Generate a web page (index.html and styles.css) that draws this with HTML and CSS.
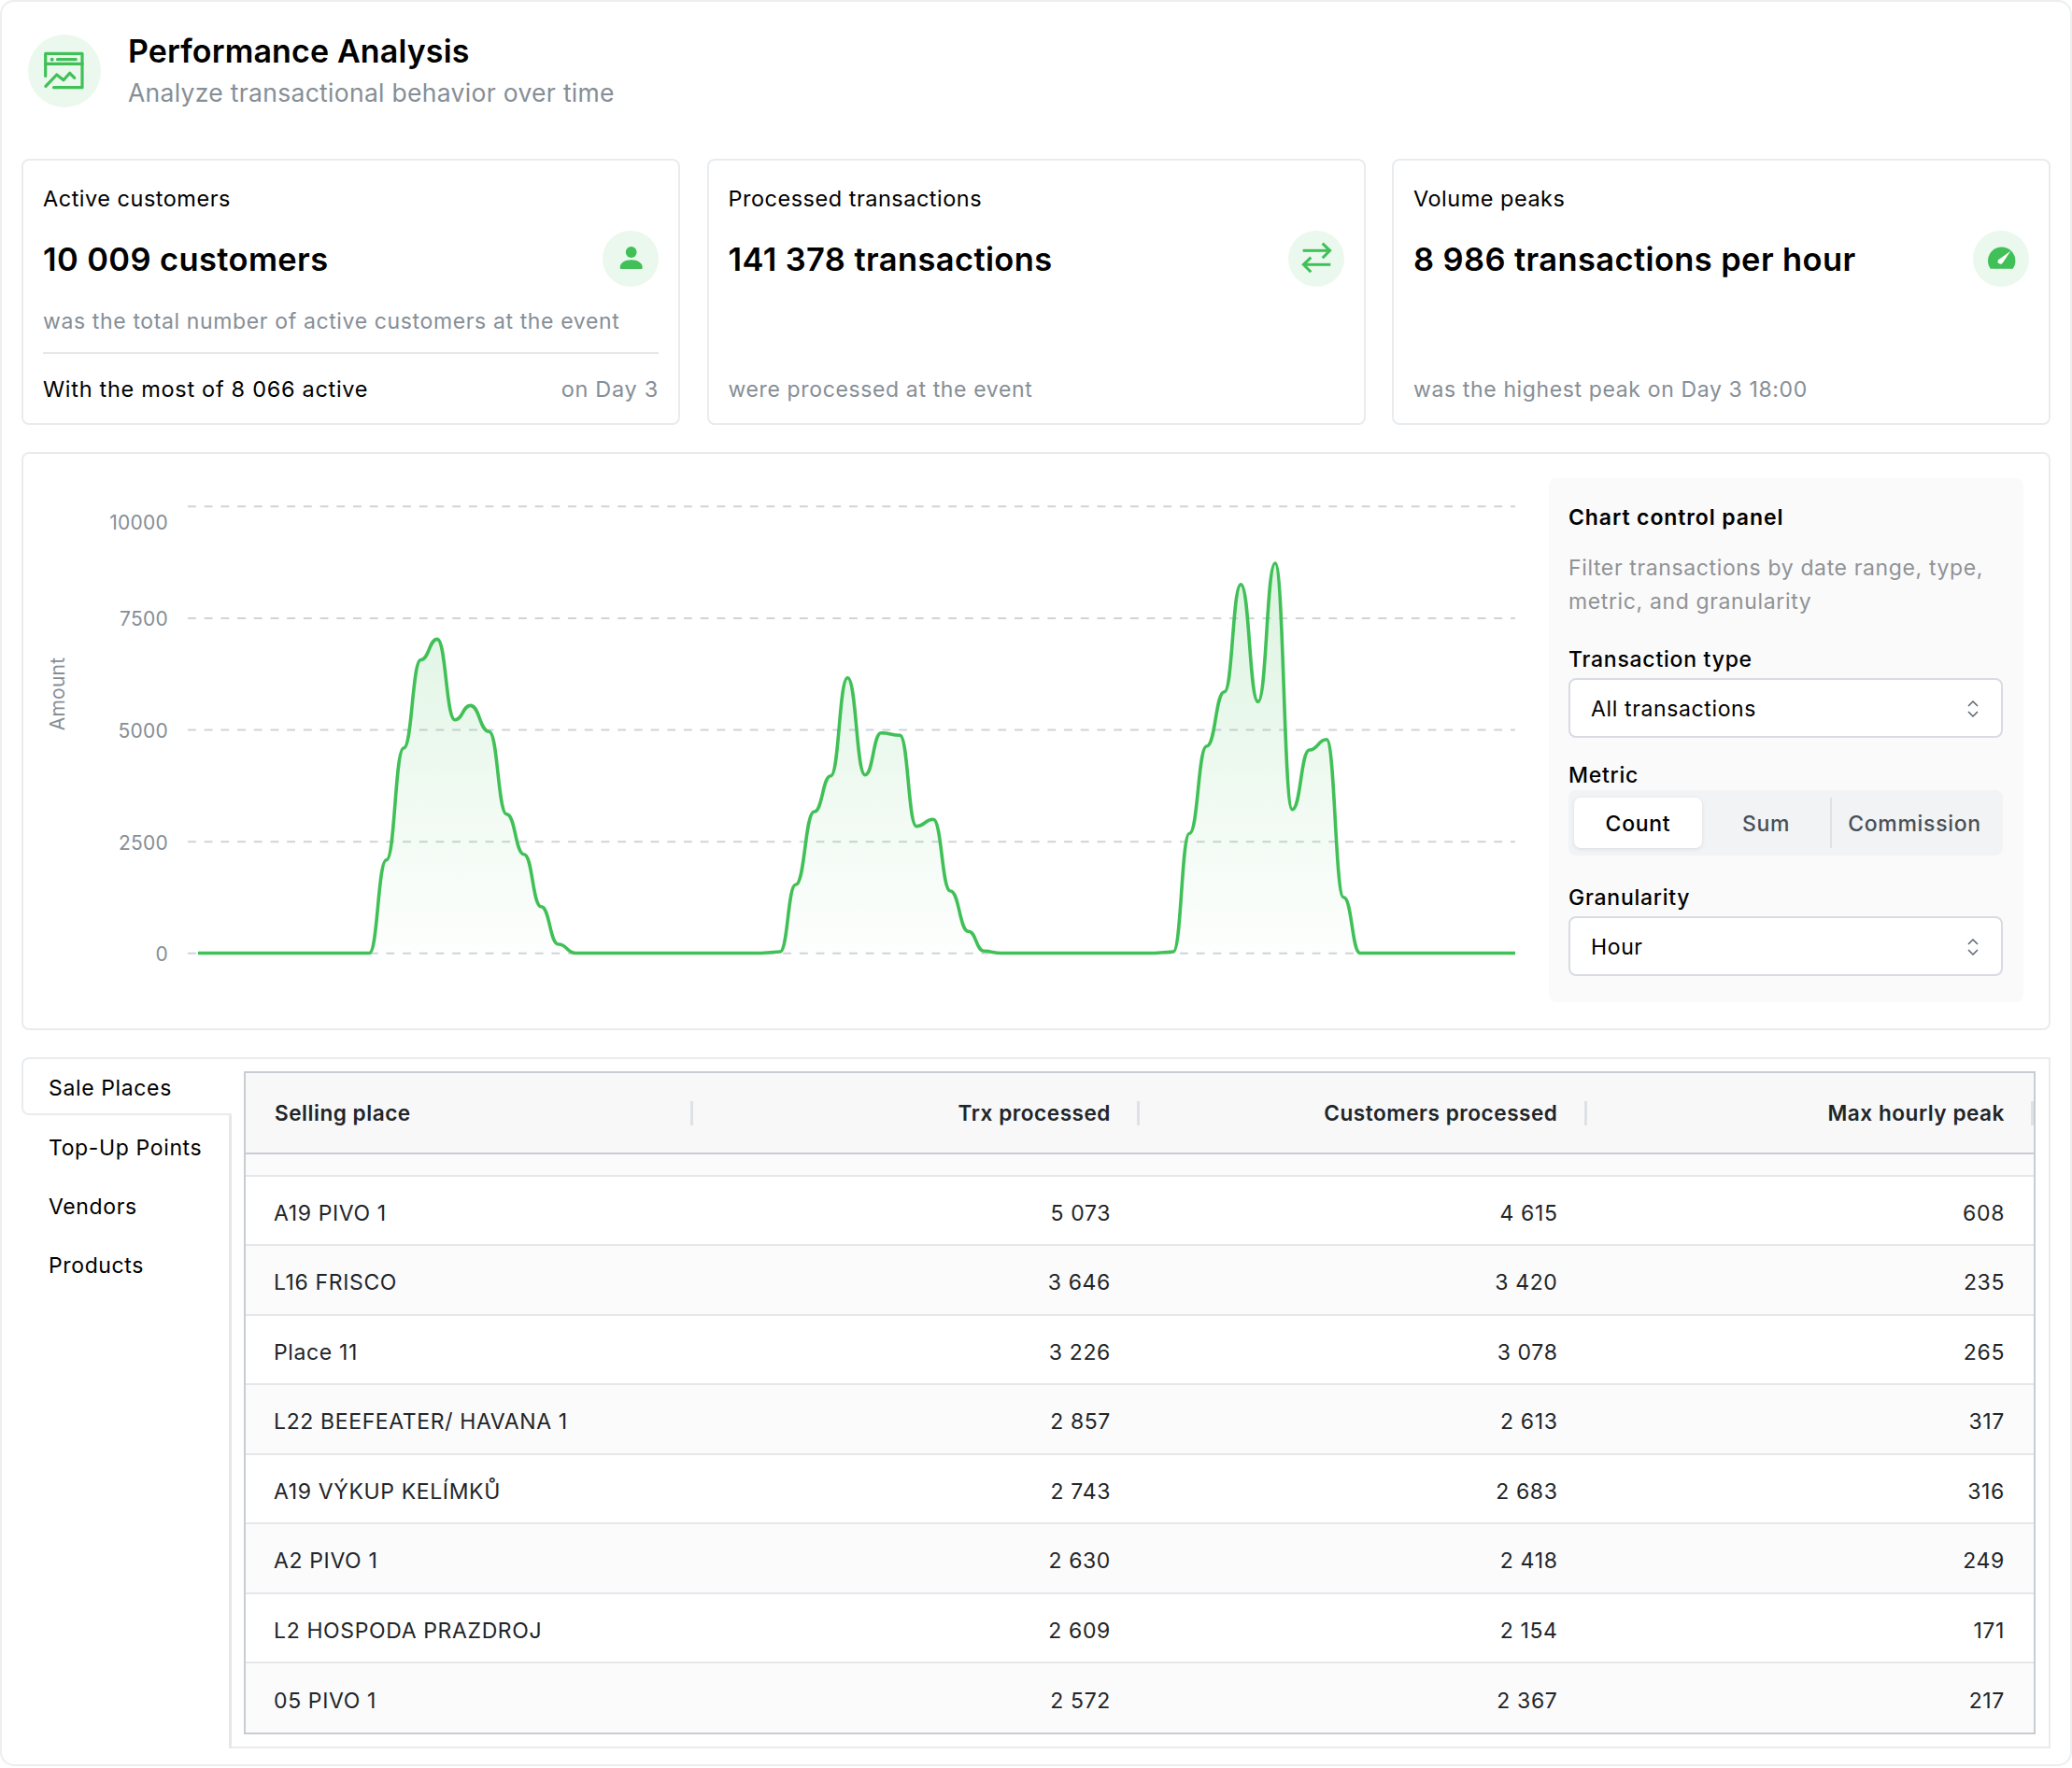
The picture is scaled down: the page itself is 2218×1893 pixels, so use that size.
FILE: index.html
```html
<!DOCTYPE html>
<html lang="en">
<head>
<meta charset="utf-8">
<title>Performance Analysis</title>
<link rel="stylesheet" href="styles.css">
</head>
<body>
<div class="page">
  <header class="header">
    <svg class="header-icon" viewBox="0 0 78 78" width="78" height="78">
      <circle cx="39" cy="39" r="39" fill="#ebf8ee"/>
      <g fill="none" stroke="#40c057" stroke-width="3.2" stroke-linecap="round" stroke-linejoin="round">
        <path d="M18.7 44.5V20.3H58V56.7H27.5"/>
        <path d="M18.7 31.3H58"/>
        <path d="M31.5 26.7H51.3"/>
        <path d="M18.9 55.3L30.7 43L38 48.7L44.7 41.3L49.7 46.3"/>
      </g>
      <circle cx="25.7" cy="26.7" r="2" fill="#40c057"/>
    </svg>
    <div class="header-text">
      <h1 class="title">Performance Analysis</h1>
      <p class="subtitle">Analyze transactional behavior over time</p>
    </div>
  </header>

  <section class="cards">
    <article class="card">
      <div class="card-label">Active customers</div>
      <div class="card-value-row">
        <div class="card-value">10 009 customers</div>
        <svg class="card-icon" viewBox="0 0 60 60" width="60" height="60">
          <circle cx="30" cy="30" r="30" fill="#ebf8ee"/>
          <circle cx="30.7" cy="23" r="5.9" fill="#40c057"/>
          <path d="M18.7 39.5c0-5 5-8.2 12-8.2s12 3.2 12 8.2c0 1-.6 1.5-1.5 1.5h-21c-.9 0-1.5-.5-1.5-1.5z" fill="#40c057"/>
        </svg>
      </div>
      <p class="card-desc card-desc-top">was the total number of active customers at the event</p>
      <div class="card-divider"></div>
      <div class="card-foot">
        <span>With the most of 8 066 active</span>
        <span class="muted">on Day 3</span>
      </div>
    </article>

    <article class="card">
      <div class="card-label">Processed transactions</div>
      <div class="card-value-row">
        <div class="card-value">141 378 transactions</div>
        <svg class="card-icon" viewBox="0 0 60 60" width="60" height="60">
          <circle cx="30" cy="30" r="30" fill="#ebf8ee"/>
          <g fill="none" stroke="#40c057" stroke-width="3">
            <path d="M15.7 21.3H45"/>
            <path d="M36.7 13.7L44.6 21.3L36.7 29.3"/>
            <path d="M45.3 36.3H16"/>
            <path d="M24.3 28.7L16.4 36.3L24.3 44.3"/>
          </g>
        </svg>
      </div>
      <p class="card-desc card-desc-bottom">were processed at the event</p>
    </article>

    <article class="card">
      <div class="card-label">Volume peaks</div>
      <div class="card-value-row">
        <div class="card-value">8 986 transactions per hour</div>
        <svg class="card-icon" viewBox="0 0 60 60" width="60" height="60">
          <circle cx="30" cy="30" r="30" fill="#ebf8ee"/>
          <path d="M18.7 40.7A14.7 14.7 0 1 1 42.7 40.7Z" fill="#40c057"/>
          <path d="M40.3 21.7L31.6 34.8a3 3 0 0 1-4.8-3.4Z" fill="#fff"/>
        </svg>
      </div>
      <p class="card-desc card-desc-bottom">was the highest peak on Day 3 18:00</p>
    </article>
  </section>

  <section class="chart-card">
    <svg class="chart" viewBox="25 487 1633 614" width="1633" height="614">
      <defs>
        <linearGradient id="areaFill" x1="0" y1="0" x2="0" y2="1">
          <stop offset="0" stop-color="#40c057" stop-opacity="0.18"/>
          <stop offset="1" stop-color="#40c057" stop-opacity="0.01"/>
        </linearGradient>
      </defs>
      <g class="grid">
        <path d="M201 543.2H1622"/>
        <path d="M201 662.9H1622"/>
        <path d="M201 782.6H1622"/>
        <path d="M201 902.3H1622"/>
        <path d="M201 1021.8H1622"/>
      </g>
      <g class="axis">
        <text x="180" y="567.5">10000</text>
        <text x="180" y="670.5">7500</text>
        <text x="180" y="790.5">5000</text>
        <text x="180" y="910.5">2500</text>
        <text x="180" y="1029.5">0</text>
      </g>
      <text class="axis-title" transform="translate(69 744) rotate(-90)">Amount</text>
      <path class="area" fill="url(#areaFill)" d="M212 1021.5H395.3C404.5 1021.5 404.5 921.8 413.7 921.8C422.9 921.8 422.9 802 432.1 802C441.3 802 441.3 707.5 450.5 707.5C459.3 707.5 459.3 685.4 468 685.4C477.5 685.4 477.5 771.8 487 771.8C495.3 771.8 495.3 756.4 503.6 756.4C513.5 756.4 513.5 784.3 523.5 784.3C533 784.3 533 872.9 542.5 872.9C551.7 872.9 551.7 915.7 560.9 915.7C570.1 915.7 570.1 971.8 579.3 971.8C588.5 971.8 588.5 1012 597.7 1012C606.9 1012 606.9 1021.5 616.1 1021.5H815L835 1020C843.4 1020 843.4 948.3 851.7 948.3C861.7 948.3 861.7 870 871.7 870C880.5 870 880.5 831.7 889.3 831.7C898.3 831.7 898.3 726.7 907.3 726.7C916.7 726.7 916.7 830.7 926 830.7C934.7 830.7 934.7 785.7 943.3 785.7C953.3 785.7 953.3 788.3 963.3 788.3C972.2 788.3 972.2 885.7 981 885.7C990 885.7 990 878.3 999 878.3C1008.2 878.3 1008.2 955 1017.3 955C1027 955 1027 998.3 1036.7 998.3C1045 998.3 1045 1019.3 1053.3 1019.3C1062.5 1019.3 1062.5 1021.5 1071.7 1021.5H1236L1256 1020C1264.7 1020 1264.7 893.3 1273.3 893.3C1282.5 893.3 1282.5 800 1291.7 800C1301.2 800 1301.2 741.7 1310.7 741.7C1319.5 741.7 1319.5 626.7 1328.3 626.7C1337.5 626.7 1337.5 752.3 1346.7 752.3C1355.9 752.3 1355.9 604 1365 604C1374.2 604 1374.2 867.7 1383.3 867.7C1392.5 867.7 1392.5 804 1401.7 804C1410.9 804 1410.9 792.7 1420 792.7C1429.2 792.7 1429.2 961.7 1438.3 961.7C1447.2 961.7 1447.2 1021.5 1456 1021.5H1622Z"/>
      <path class="line" d="M212 1021.5H395.3C404.5 1021.5 404.5 921.8 413.7 921.8C422.9 921.8 422.9 802 432.1 802C441.3 802 441.3 707.5 450.5 707.5C459.3 707.5 459.3 685.4 468 685.4C477.5 685.4 477.5 771.8 487 771.8C495.3 771.8 495.3 756.4 503.6 756.4C513.5 756.4 513.5 784.3 523.5 784.3C533 784.3 533 872.9 542.5 872.9C551.7 872.9 551.7 915.7 560.9 915.7C570.1 915.7 570.1 971.8 579.3 971.8C588.5 971.8 588.5 1012 597.7 1012C606.9 1012 606.9 1021.5 616.1 1021.5H815L835 1020C843.4 1020 843.4 948.3 851.7 948.3C861.7 948.3 861.7 870 871.7 870C880.5 870 880.5 831.7 889.3 831.7C898.3 831.7 898.3 726.7 907.3 726.7C916.7 726.7 916.7 830.7 926 830.7C934.7 830.7 934.7 785.7 943.3 785.7C953.3 785.7 953.3 788.3 963.3 788.3C972.2 788.3 972.2 885.7 981 885.7C990 885.7 990 878.3 999 878.3C1008.2 878.3 1008.2 955 1017.3 955C1027 955 1027 998.3 1036.7 998.3C1045 998.3 1045 1019.3 1053.3 1019.3C1062.5 1019.3 1062.5 1021.5 1071.7 1021.5H1236L1256 1020C1264.7 1020 1264.7 893.3 1273.3 893.3C1282.5 893.3 1282.5 800 1291.7 800C1301.2 800 1301.2 741.7 1310.7 741.7C1319.5 741.7 1319.5 626.7 1328.3 626.7C1337.5 626.7 1337.5 752.3 1346.7 752.3C1355.9 752.3 1355.9 604 1365 604C1374.2 604 1374.2 867.7 1383.3 867.7C1392.5 867.7 1392.5 804 1401.7 804C1410.9 804 1410.9 792.7 1420 792.7C1429.2 792.7 1429.2 961.7 1438.3 961.7C1447.2 961.7 1447.2 1021.5 1456 1021.5H1622"/>
    </svg>

    <aside class="panel">
      <h2 class="panel-title">Chart control panel</h2>
      <p class="panel-desc">Filter transactions by date range, type, metric, and granularity</p>
      <div class="field-label field-type">Transaction type</div>
      <div class="select select-type">
        <span>All transactions</span>
        <svg class="chevrons" viewBox="0 0 14 22" width="14" height="22"><path d="M2 8L7 3L12 8M2 14L7 19L12 14"/></svg>
      </div>
      <div class="field-label field-metric">Metric</div>
      <div class="segmented">
        <div class="segment segment-active">Count</div>
        <div class="segment">Sum</div>
        <div class="segment segment-last">Commission</div>
      </div>
      <div class="field-label field-gran">Granularity</div>
      <div class="select select-gran">
        <span>Hour</span>
        <svg class="chevrons" viewBox="0 0 14 22" width="14" height="22"><path d="M2 8L7 3L12 8M2 14L7 19L12 14"/></svg>
      </div>
    </aside>
  </section>

  <section class="data">
    <nav class="tabs">
      <div class="tab tab-active">Sale Places</div>
      <div class="tab">Top-Up Points</div>
      <div class="tab">Vendors</div>
      <div class="tab">Products</div>
    </nav>
    <div class="table-panel">
      <table class="table">
        <thead>
          <tr>
            <th class="left">Selling place</th>
            <th>Trx processed</th>
            <th>Customers processed</th>
            <th>Max hourly peak</th>
          </tr>
        </thead>
        <tbody>
          <tr class="spacer"><td colspan="4"></td></tr>
          <tr><td class="left">A19 PIVO 1</td><td>5 073</td><td>4 615</td><td>608</td></tr>
          <tr><td class="left">L16 FRISCO</td><td>3 646</td><td>3 420</td><td>235</td></tr>
          <tr><td class="left">Place 11</td><td>3 226</td><td>3 078</td><td>265</td></tr>
          <tr><td class="left">L22 BEEFEATER/ HAVANA 1</td><td>2 857</td><td>2 613</td><td>317</td></tr>
          <tr><td class="left">A19 VÝKUP KELÍMKŮ</td><td>2 743</td><td>2 683</td><td>316</td></tr>
          <tr><td class="left">A2 PIVO 1</td><td>2 630</td><td>2 418</td><td>249</td></tr>
          <tr><td class="left">L2 HOSPODA PRAZDROJ</td><td>2 609</td><td>2 154</td><td>171</td></tr>
          <tr><td class="left">05 PIVO 1</td><td>2 572</td><td>2 367</td><td>217</td></tr>
        </tbody>
      </table>
    </div>
  </section>
</div>
</body>
</html>
```

FILE: styles.css
```css
* { box-sizing: border-box; }
html, body { margin: 0; padding: 0; background: #fff; }
body {
  font-family: Inter, "Noto Sans", sans-serif;
  font-size: 23px;
  letter-spacing: 0.63px;
  color: #000;
}

.page {
  width: 2218px;
  height: 1891px;
  border: 2px solid #eceef0;
  border-radius: 15px;
  padding: 30px 21px 0;
}

.header { display: flex; align-items: center; gap: 29px; height: 88px; margin: 0 0 50px 7px; }
.header-icon { flex: none; }
.header-text { display: flex; flex-direction: column; }
.title { margin: 0; font-size: 34px; line-height: 45px; font-weight: 600; letter-spacing: 0.14px; }
.subtitle { margin: 0; font-size: 26.5px; line-height: 44px; color: #868e96; letter-spacing: 0.3px; }

.cards { display: grid; grid-template-columns: repeat(3, 1fr); gap: 28.5px; }
.card {
  height: 285px;
  border: 2px solid #e9ecef;
  border-radius: 8px;
  padding: 21px 21px 18px;
  display: flex;
  flex-direction: column;
}
.card-label { font-size: 23.5px; letter-spacing: 0.5px; line-height: 40px; }
.card-value-row { display: flex; justify-content: space-between; align-items: center; height: 60px; margin-top: 14px; }
.card-value { font-size: 34.5px; font-weight: 600; letter-spacing: 0.38px; }
.card-icon { flex: none; }
.card-desc { margin: 0; line-height: 36px; color: #868e96; }
.card-desc-top { margin-top: 19px; }
.card-desc-bottom { margin-top: auto; }
.card-divider { height: 2px; background: #e5e7eb; margin-top: 15px; }
.card-foot { display: flex; justify-content: space-between; line-height: 36px; margin-top: 20px; font-size: 23.5px; letter-spacing: 0.7px; }
.muted { color: #868e96; }

.chart-card { display: flex; height: 619px; margin-top: 29px; border: 2px solid #e9ecef; border-radius: 8px; }
.chart { flex: none; display: block; }
.grid path { stroke: #ced4da; stroke-width: 2; stroke-dasharray: 8.85 8.85; fill: none; }
.axis text { font-size: 21px; letter-spacing: 0.25px; fill: #868e96; text-anchor: end; }
.axis-title { font-size: 21px; letter-spacing: 0.25px; fill: #868e96; text-anchor: middle; }
.line { fill: none; stroke: #40c057; stroke-width: 3.6; stroke-linejoin: round; }

.panel {
  flex: none;
  width: 508px;
  height: 561px;
  margin: 26px 27px 0 0;
  padding: 24px 22px 0 21px;
  background: #fafafa;
  border-radius: 8px;
}
.panel-title { margin: 0; font-size: 23px; line-height: 36px; font-weight: 600; letter-spacing: 0.9px; }
.panel-desc { margin: 18px 0 0; line-height: 36px; color: #909296; }
.field-label { font-weight: 500; line-height: 36px; letter-spacing: 0.75px; }
.field-type { margin-top: 26px; }
.field-metric { margin-top: 24px; line-height: 32px; }
.field-gran { margin-top: 27px; }
.select {
  display: flex;
  align-items: center;
  justify-content: space-between;
  height: 64px;
  background: #fff;
  border: 2px solid #d8dce2;
  border-radius: 8px;
  padding: 1px 23px 0 22px;
}
.select-type { margin-top: 2px; }
.select-gran { margin-top: 2px; }
.chevrons { fill: none; stroke: #5c6570; stroke-width: 1.5; }

.segmented {
  display: grid;
  grid-template-columns: 137px 137px 1fr;
  height: 70px;
  padding: 8px 6px;
  background: #f1f3f5;
  border-radius: 8px;
}
.segment { display: flex; align-items: center; justify-content: center; font-weight: 500; color: #495057; letter-spacing: 0.7px; padding-top: 2px; }
.segment-active { background: #fff; color: #000; border-radius: 7px; box-shadow: 0 1px 4px rgba(0,0,0,.1); }
.segment-last { border-left: 2px solid #dee2e6; }

.data { display: flex; height: 740px; margin-top: 29px; }
.tabs { width: 225px; flex: none; border-right: 3px solid #e5e7eb; }
.tab { height: 63px; display: flex; align-items: center; padding: 4px 0 0 29px; }
.tab-active {
  height: 62px;
  margin-right: -3px;
  padding-left: 27px;
  background: #fff;
  border: 2px solid #e9ecef;
  border-right: 0;
  border-radius: 8px 0 0 8px;
  position: relative;
}
.tab-active + .tab { margin-top: 1px; }

.table-panel { flex: 1; border: 2px solid #e9ecef; border-left: 0; padding: 13px 14px 15px 13px; }
.table {
  width: 100%;
  table-layout: fixed;
  border-collapse: separate;
  border-spacing: 0;
  border: 2px solid #c8cdd3;
}
.table th {
  height: 87px;
  padding: 0 31px 0 30px;
  text-align: right;
  font-size: 22.6px;
  letter-spacing: 0.52px;
  font-weight: 600;
  color: #212529;
  background: #f8f8f9;
  border-bottom: 2px solid #c8cdd3;
  position: relative;
}
.table th.left { padding-left: 31px; }
.table th::after {
  content: "";
  position: absolute;
  right: 0;
  top: 30px;
  width: 3px;
  height: 26px;
  background: #dee2e6;
}
.table td {
  height: 75px;
  padding: 5px 31px 0 30px;
  text-align: right;
  color: #212529;
  border-bottom: 2px solid #e5e7eb;
}
.table tr:nth-child(even) td { height: 74px; background: #fff; }
.table tr:nth-child(odd) td { background: #fbfbfc; }
.table .left { text-align: left; }
.table tr:last-child td { height: 74px; border-bottom: 0; }
.table .spacer td { height: 24px; padding: 0; background: #fafafa; }
```
